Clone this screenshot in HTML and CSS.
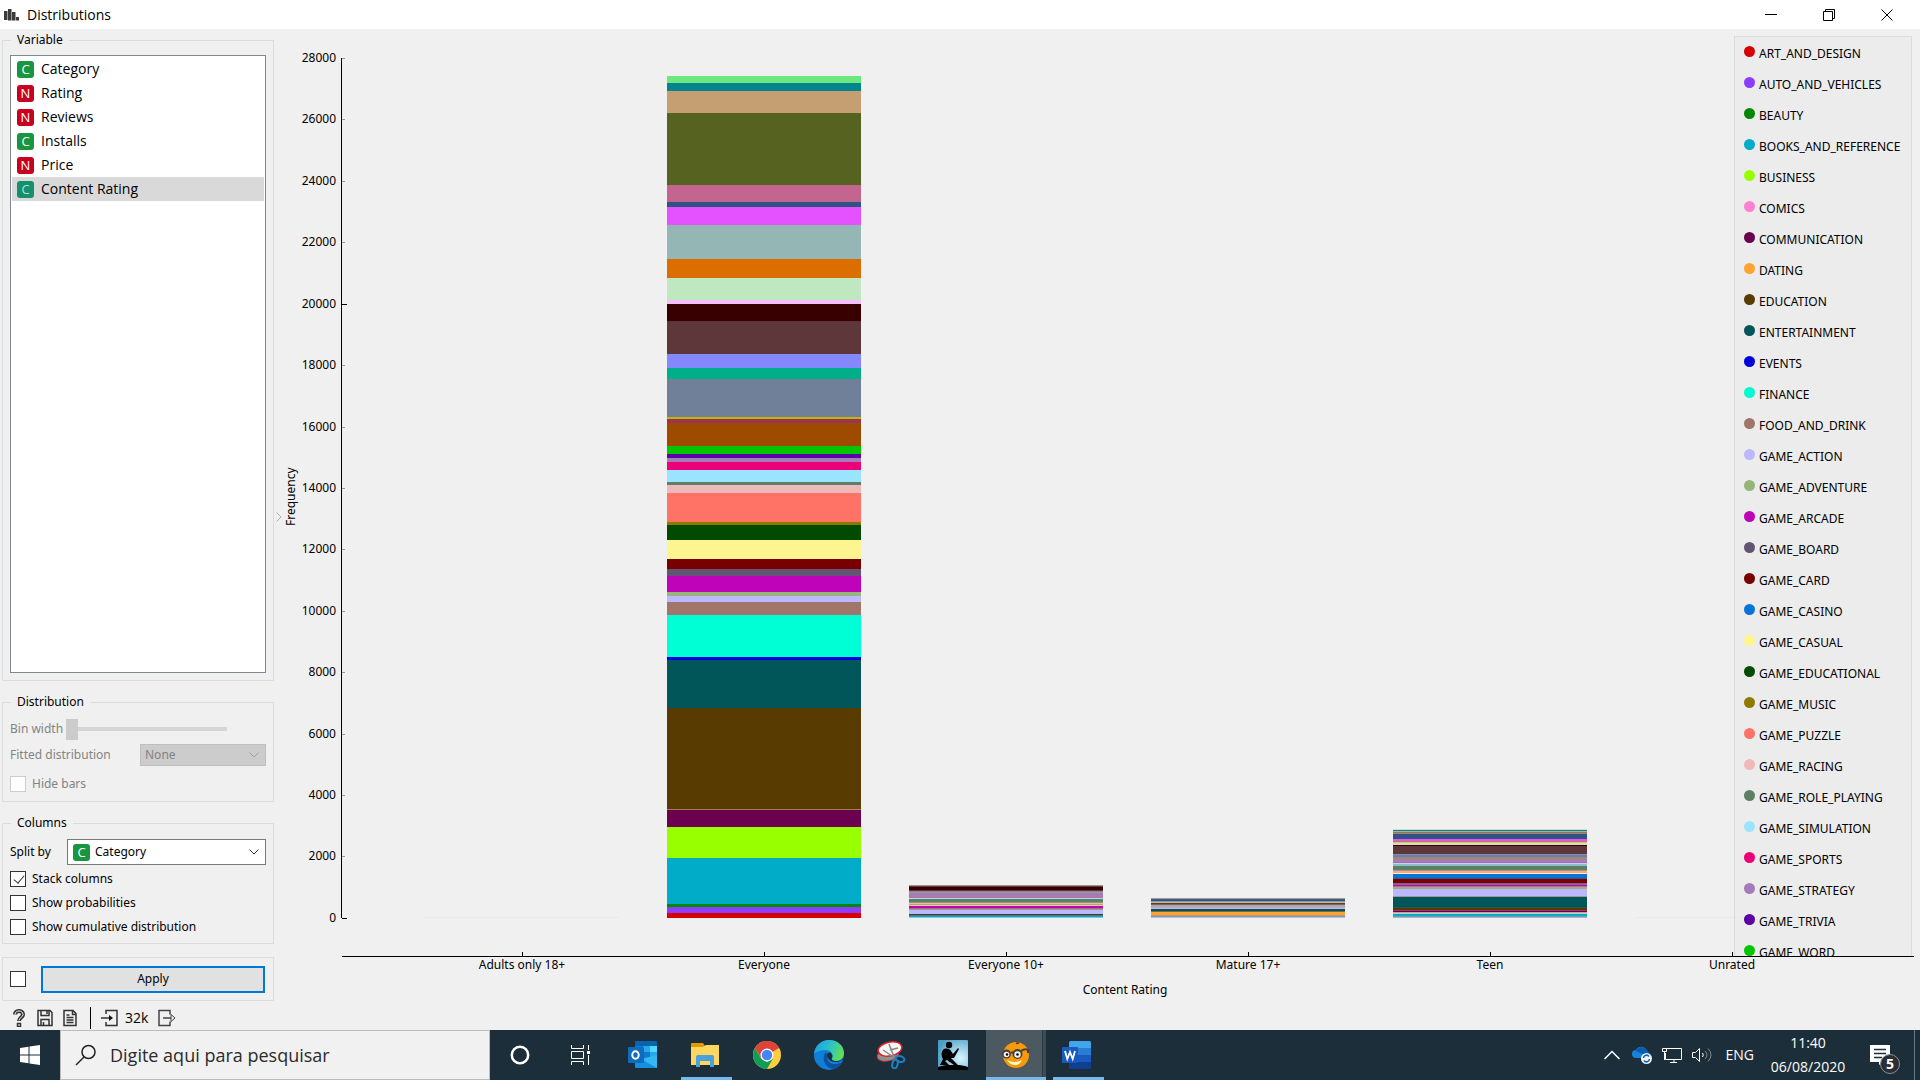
FILE: index.html
```html
<!DOCTYPE html>
<html lang="en">
<head>
<meta charset="utf-8">
<title>Distributions</title>
<link rel="stylesheet" href="styles.css">
</head>
<body>
<header class="titlebar">
  <svg class="app-icon" width="16" height="12" viewBox="0 0 16 12" fill="#3a3a3a"><path d="M0 2h3.500v9H0zM4 0h3.500v11.500H4zM8 3h3.500v8.500H8zM12 8h3v3.500h-3z"/></svg>
  <h1>Distributions</h1>
  <div class="win-controls">
    <button aria-label="Minimize"><svg width="12" height="12" viewBox="0 0 12 12" stroke="#000"><path d="M0 5.500h12"/></svg></button>
    <button aria-label="Restore"><svg width="12" height="12" viewBox="0 0 12 12" fill="none" stroke="#000"><path d="M.5 2.500h9v9h-9zM2.500 2.500v-2h9v9h-2"/></svg></button>
    <button aria-label="Close"><svg width="12" height="12" viewBox="0 0 12 12" stroke="#000"><path d="M.5.5l11 11M11.500.5l-11 11"/></svg></button>
  </div>
</header>

<main class="workspace">
  <aside class="controls">
    <fieldset class="group group-variable">
      <legend>Variable</legend>
      <ul class="var-list">
        <li><span class="badge cat">C</span>Category</li>
        <li><span class="badge num">N</span>Rating</li>
        <li><span class="badge num">N</span>Reviews</li>
        <li><span class="badge cat">C</span>Installs</li>
        <li><span class="badge num">N</span>Price</li>
        <li class="selected"><span class="badge cat">C</span>Content Rating</li>
      </ul>
    </fieldset>

    <fieldset class="group group-distribution" disabled>
      <legend>Distribution</legend>
      <div class="row">
        <label class="bin-label" for="bin">Bin width</label>
        <input id="bin" type="range" min="0" max="10" value="0">
      </div>
      <div class="row spread">
        <label for="fitted">Fitted distribution</label>
        <span class="combo combo-fitted"><select id="fitted"><option>None</option></select><svg class="chevron" width="10" height="6" viewBox="0 0 10 6" fill="none" stroke="currentColor"><path d="M.5.5L5 5 9.500.5"/></svg></span>
      </div>
      <label class="check"><input type="checkbox">Hide bars</label>
    </fieldset>

    <fieldset class="group group-columns">
      <legend>Columns</legend>
      <div class="row spread">
        <label for="split">Split by</label>
        <span class="combo combo-split"><span class="badge cat">C</span><select id="split"><option>Category</option></select><svg class="chevron" width="10" height="6" viewBox="0 0 10 6" fill="none" stroke="currentColor"><path d="M.5.5L5 5 9.500.5"/></svg></span>
      </div>
      <label class="check"><input type="checkbox" checked>Stack columns</label>
      <label class="check"><input type="checkbox">Show probabilities</label>
      <label class="check"><input type="checkbox">Show cumulative distribution</label>
    </fieldset>

    <div class="apply-box">
      <input type="checkbox" aria-label="Apply automatically">
      <button class="apply">Apply</button>
    </div>

    <div class="statusbar">
      <button aria-label="Help"><svg width="16" height="18" viewBox="0 0 16 18" fill="none"><path d="M4 5.500C4 .8 12 .8 12 5.500 12 8.500 8 8.500 8 12" stroke="#333" stroke-width="4"/><path d="M4 5.500C4 .8 12 .8 12 5.500 12 8.500 8 8.500 8 11.500" stroke="#f0f0f0" stroke-width="1"/><path d="M6.500 14.500h3v3h-3z" stroke="#333" stroke-width="1.500"/></svg></button>
      <button aria-label="Save"><svg width="16" height="18" viewBox="0 0 16 18" fill="none" stroke="#333" stroke-width="1.500"><path d="M1 1.500h12l2 2v13H1zM4 1.500v5h8v-5M4 16.500v-6h8v6M6.500 16v-3M10 2v3"/></svg></button>
      <button aria-label="Report"><svg width="14" height="18" viewBox="0 0 14 18" fill="none" stroke="#333" stroke-width="1.500"><path d="M1 1.500h9l3 3v12H1zM9.500 2v3.500H13M3.500 6h3M3.500 8.500h7M3.500 11h7M3.500 13.500h7"/></svg></button>
      <span class="separator"></span>
      <button aria-label="Input"><svg width="17" height="18" viewBox="0 0 17 18" fill="none" stroke="#333" stroke-width="1.500"><path d="M5 5V1.500h11v15H5V13"/><path d="M0 9h9" /><path d="M8 6l4 3-4 3z" fill="#111" stroke="none"/></svg></button>
      <span class="count">32k</span>
      <button aria-label="Output"><svg width="18" height="18" viewBox="0 0 18 18" fill="none" stroke="#444" stroke-width="1.500"><path d="M12 5.500v-4H1v15h11v-4"/><path d="M5 9h8"/><path d="M13 5.500L17 9l-4 3.500z" stroke-width="1"/></svg></button>
    </div>
  </aside>

  <button class="splitter" aria-label="Hide panel"><svg width="6" height="10" viewBox="0 0 6 10" fill="none" stroke="#b0b0b0"><path d="M.5.5L5 5 .5 9.500"/></svg></button>

  <section class="chart" aria-label="Distribution of Content Rating">
    <div class="y-title">Frequency</div>
    <ol class="y-axis">
      <li>28000</li><li>26000</li><li>24000</li><li>22000</li><li class="major">20000</li><li>18000</li><li>16000</li><li>14000</li><li>12000</li><li>10000</li><li>8000</li><li>6000</li><li>4000</li><li>2000</li><li class="major">0</li>
    </ol>
    <div class="plot">
      <div class="bars" id="bars"></div>
      <ul class="legend" id="legend"></ul>
    </div>
    <ol class="x-axis">
      <li>Adults only 18+</li><li>Everyone</li><li>Everyone 10+</li><li>Mature 17+</li><li>Teen</li><li>Unrated</li>
    </ol>
    <div class="x-title">Content Rating</div>
  </section>
</main>

<footer class="taskbar">
  <button class="start" aria-label="Start"><svg width="20" height="20" viewBox="0 0 20 20" fill="#fff"><path d="M0 3l8.500-1.200v7.700H0zM9.500 1.600L20 0v9.500H9.500zM0 10.500h8.500v7.700L0 17zM9.500 10.500H20V20L9.500 18.400z"/></svg></button>
  <label class="search">
    <svg width="22" height="22" viewBox="0 0 22 22" fill="none" stroke="#222" stroke-width="1.500"><circle cx="13.500" cy="8" r="6.500"/><path d="M9 13l-8 8"/></svg>
    <input type="text" placeholder="Digite aqui para pesquisar" aria-label="Search">
  </label>
  <nav class="apps">
    <button aria-label="Cortana"><svg width="20" height="20" viewBox="0 0 20 20" fill="none" stroke="#fff" stroke-width="2.500"><circle cx="10" cy="10" r="8.200"/></svg></button>
    <button aria-label="Task view"><svg width="22" height="20" viewBox="0 0 22 20" fill="none" stroke="#fff"><path d="M1.500 0v3.500h12V0M1.500 20v-3.500h12V20M1.500 6.500h12v7h-12zM18.500 0v5M18.500 10v10"/><path d="M17 6h3v3h-3z" fill="#fff" stroke="none"/></svg></button>
    <button aria-label="Outlook"><svg width="30" height="30" viewBox="0 0 30 30"><path d="M8 1h20a1 1 0 011 1v8H7V2z" fill="#0a64ad"/><path d="M7 6h8v12H7z" fill="#0f78d4"/><path d="M15 6h7v6h-7z" fill="#28a8ea"/><path d="M22 6h7v6h-7z" fill="#50d9ff"/><path d="M15 12h7v6h-7z" fill="#0f78d4"/><path d="M22 12h7v6h-7z" fill="#28a8ea"/><path d="M7 15l11 6 11-6v12a1 1 0 01-1 1H8a1 1 0 01-1-1z" fill="#1490df"/><path d="M29 15v13L13 19z" fill="#35b8f1"/><rect y="7" width="16" height="16" rx="1" fill="#0f6cbd"/><ellipse cx="7.500" cy="15" rx="3.200" ry="3.700" fill="none" stroke="#fff" stroke-width="2"/></svg></button>
    <button class="running" aria-label="File Explorer"><svg width="28" height="24" viewBox="0 0 28 24"><path d="M0 1q0-1 1-1h11l2 3v4H0z" fill="#e09b00"/><path d="M0 4h12l3-2h13v20H0z" fill="#ffd75e"/><path d="M5 24V14q0-2 2-2h14q2 0 2 2v10h-4v-6H9v6z" fill="#4ba0de"/></svg></button>
    <button aria-label="Chrome"><svg width="28" height="28" viewBox="0 0 28 28"><circle cx="14" cy="14" r="14" fill="#ffcd40"/><path d="M14 14L1.900 7A14 14 0 0126.100 7z" fill="#db4437"/><path d="M14 7h12.100A14 14 0 001.900 7L8 17z" fill="#db4437"/><path d="M1.900 7A14 14 0 0014 28l6-10.500L14 21l-6-3.500z" fill="#0f9d58"/><circle cx="14" cy="14" r="6.500" fill="#fff"/><circle cx="14" cy="14" r="5.200" fill="#4285f4"/></svg></button>
    <button aria-label="Edge"><svg width="30" height="30" viewBox="0 0 30 30"><defs><linearGradient id="edge-top" x1="0" x2="1" y1=".3" y2=".6"><stop stop-color="#1c9fe0"/><stop offset=".5" stop-color="#2cc3c8"/><stop offset="1" stop-color="#66e04a"/></linearGradient></defs><circle cx="15" cy="15" r="15" fill="#0f80d8"/><path d="M0 14C1 5 8 0 15 0c9 0 15 6 15 13 0 5-4 8-8 8-3 0-5-1-4-3 2-3-1-8-6-8C6 10 2 12 0 14z" fill="url(#edge-top)"/><path d="M12 12c-5 5-2 16 8 17 4-1 7-4 8-7-7 4-15 2-15-5 0-2 0-3-1-5z" fill="#0e4fa0"/><path d="M13 15c0 6 8 9 14.500 5.500l2.500-1v-2c-2 3-5 3.500-8 3.500-3 0-5-1-4-3 1-2 0-4-1-5-2-1-4 0-4 2z" fill="#1b303c"/></svg></button>
    <button aria-label="Snipping Tool"><svg width="30" height="28" viewBox="0 0 30 28"><ellipse cx="12" cy="14" rx="11" ry="6" transform="rotate(-12 12 14)" fill="#8f8f94" stroke="#b33"/><ellipse cx="14" cy="8" rx="12" ry="7" transform="rotate(-12 14 8)" fill="#f5f5f5" stroke="#d4232b" stroke-width="1.500"/><path d="M13 3l5 13M7 9l12 8M14 9l8-2" stroke="#888" stroke-width="1.500"/><g fill="none" stroke="#1c82c6" stroke-width="2"><ellipse cx="24" cy="18" rx="4.500" ry="2.800" transform="rotate(15 24 18)"/><ellipse cx="19" cy="23" rx="2.600" ry="4.500" transform="rotate(15 19 23)"/></g></svg></button>
    <button aria-label="Kindle"><svg width="30" height="30" viewBox="0 0 30 30"><defs><radialGradient id="kindle-sky" cx=".75" cy=".6" r=".8"><stop stop-color="#d8f6ff"/><stop offset="1" stop-color="#4a9dc4"/></radialGradient></defs><rect width="30" height="30" rx="1" fill="url(#kindle-sky)"/><path d="M0 27c4-1 6-2 9-2h11c4 0 7 1 10 2v3H0z"/><circle cx="11" cy="5" r="3.200"/><path d="M6 9c3-1 6 0 7 2l2 3 5-6 1 1-5 9h-3l7 7h-4l-7-5-2 1 4 4H2l3-6c-2-3-2-8 1-10z"/></svg></button>
    <button class="running active" aria-label="Orange"><svg width="28" height="28" viewBox="0 0 28 28"><circle cx="15" cy="14" r="13" fill="#f79a0c"/><circle cx="5.500" cy="13" r="4.500" fill="#4a4036"/><circle cx="16.500" cy="13" r="5" fill="#4a4036"/><circle cx="5.500" cy="13.500" r="2.800" fill="#f4f4f4"/><circle cx="16.500" cy="13.500" r="3.200" fill="#f4f4f4"/><circle cx="6" cy="13.500" r="1.200"/><circle cx="16.500" cy="13.500" r="1.300"/><path d="M10 11.500h2M20 10q4-3 7-1v3" fill="none" stroke="#4a4036" stroke-width="2"/><path d="M6 19q8 4 15 0-2 5-7 5-5 0-8-5z" fill="#fff7c8"/><path d="M15 2.500q2-1 3 0" fill="none" stroke="#5a3500" stroke-width="1.500"/></svg></button>
    <button class="running" aria-label="Word"><svg width="30" height="28" viewBox="0 0 30 28"><path d="M7 1.500A1.500 1.500 0 018.500 0h19A1.500 1.500 0 0129 1.500V7H7z" fill="#41a5ee"/><path d="M7 7h22v7H7z" fill="#2b7cd3"/><path d="M7 14h22v7H7z" fill="#185abd"/><path d="M7 21h22v5.500a1.500 1.500 0 01-1.500 1.500h-19A1.500 1.500 0 017 26.500z" fill="#103f91"/><rect y="6" width="16" height="16" rx="1" fill="#185abd"/><path d="M3 10l2.300 8L8 11l2.700 7L13 10" fill="none" stroke="#fff" stroke-width="1.800"/></svg></button>
  </nav>
  <div class="tray">
    <button aria-label="Show hidden icons"><svg width="16" height="10" viewBox="0 0 16 10" fill="none" stroke="#fff" stroke-width="1.500"><path d="M.5 9L8 1.500 15.500 9"/></svg></button>
    <button aria-label="OneDrive"><svg width="20" height="18" viewBox="0 0 20 18"><path d="M4 12a4 4 0 010-8 6 6 0 0111 1 4 4 0 011 7z" fill="#1683d8"/><path d="M5 3a6 6 0 0110 2 4 4 0 012 6L4 5z" fill="#0a5cb0"/><circle cx="14.500" cy="12.500" r="5.500" fill="#f2f2f2"/><path d="M11.500 12a3 3 0 015.500-1.500M17.500 13a3 3 0 01-5.500 1.500" fill="none" stroke="#0a6ac0" stroke-width="1.500"/></svg></button>
    <button aria-label="Network"><svg width="20" height="18" viewBox="0 0 20 18" fill="none" stroke="#fff"><path d="M4.500 2.500h15v11h-16V7M12 13.500v3M8 16.500h7M.5 2.500h4v3h-4zM2.500 5v9"/></svg></button>
    <button aria-label="Volume"><svg width="20" height="18" viewBox="0 0 20 18" fill="none" stroke="#fff"><path d="M.5 6.500h3l4-4v13l-4-4h-3zM10.500 7q1.500 2 0 4"/><path d="M13 5q4 4 0 8M16 2.500q6 6.500 0 13" stroke="#7f8a92"/></svg></button>
    <span class="lang">ENG</span>
    <div class="clock"><time>11:40</time><time>06/08/2020</time></div>
    <button class="notify" aria-label="Notifications"><svg width="20" height="20" viewBox="0 0 20 20"><path d="M0 0h20v17h-7l-4 3v-3H0z" fill="#fff"/><path d="M4 4.500h12M4 8.500h12M4 12.500h8" stroke="#1c2e3a" stroke-width="1.500"/></svg><span class="notify-count">5</span></button>
    <span class="peek"></span>
  </div>
</footer>
<script src="chart.js"></script>
</body>
</html>
```

FILE: styles.css
```css
* { box-sizing: border-box; }

:root {
  --ui: "Noto Sans", "DejaVu Sans Condensed", sans-serif;
  --segoe: "Open Sans", "Noto Sans", sans-serif;
  --line: #dcdcdc;
}

body {
  margin: 0;
  min-height: 100vh;
  display: flex;
  flex-direction: column;
  background: #f0f0f0;
  color: #000;
  font: 12px/16px var(--ui);
}

button {
  display: flex;
  align-items: center;
  justify-content: center;
  padding: 0;
  border: 0;
  background: none;
  font: inherit;
  color: inherit;
}

svg { display: block; flex: none; }

ul, ol { list-style: none; margin: 0; padding: 0; }

/* Title bar */
.titlebar {
  display: flex;
  align-items: center;
  height: 29px;
  padding: 0 4px;
  background: #fff;
}
.titlebar h1 {
  margin: 0 0 0 7px;
  font: 14px/20px var(--segoe);
}
.win-controls { display: flex; margin-left: auto; }
.win-controls button { width: 58px; height: 28px; }

/* Main area */
.workspace { flex: 1; display: flex; }

.controls {
  width: 274px;
  padding: 3px 0 0 2px;
  display: flex;
  flex-direction: column;
  gap: 13px;
}

.group {
  margin: 0;
  min-width: 0;
  padding: 8px 7px 7px;
  border: 1px solid var(--line);
}
.group legend { margin-left: 1px; padding: 0 6px; }
.group-variable { flex: 1; display: flex; flex-direction: column; padding-top: 7px; }

.var-list {
  flex: 1;
  padding: 1px;
  border: 1px solid #828790;
  background: #fff;
  font: 14px/24px var(--segoe);
}
.var-list li { display: flex; align-items: center; gap: 7px; padding-left: 5px; }
.var-list .selected { background: #d9d9d9; }
.var-list .selected .badge { background: #168f6c; color: #b5e0d4; }

.badge {
  width: 17px;
  height: 17px;
  border-radius: 3px;
  color: #fff;
  font: 13px/17px var(--segoe);
  text-align: center;
}
.badge.cat { background: #1a9641; }
.badge.num { background: #ca0020; }

.row { display: flex; align-items: center; height: 22px; gap: 4px; margin-bottom: 4px; }
.spread { justify-content: space-between; }
.bin-label { width: 52px; white-space: nowrap; }

.group-distribution { color: #838383; }
.group-distribution legend { color: #000; }
.group-distribution .check { height: 20px; margin-top: 8px; }

input[type="range"] {
  appearance: none;
  width: 161px;
  height: 22px;
  margin: 0;
  background: linear-gradient(#d6d6d6, #d6d6d6) center / 100% 4px no-repeat;
}
input[type="range"]::-webkit-slider-thumb {
  appearance: none;
  width: 12px;
  height: 21px;
  background: #ccc;
}

.combo {
  display: flex;
  align-items: center;
  padding: 0 6px 0 4px;
  border: 1px solid #7a7a7a;
  background: #fff;
  color: #333;
}
.combo select {
  flex: 1;
  appearance: none;
  min-width: 0;
  padding: 0;
  border: 0;
  background: none;
  font: inherit;
  color: #000;
  opacity: 1;
}
.combo-fitted { width: 126px; height: 22px; background: #ccc; border-color: #bfbfbf; color: #a0a0a0; }
.combo-fitted select { color: #838383; }
.combo-split { width: 199px; height: 26px; padding-left: 5px; gap: 5px; }

input[type="checkbox"] {
  appearance: none;
  width: 16px;
  height: 16px;
  margin: 0;
  border: 1px solid #333;
  background: #fff;
}
input[type="checkbox"]:disabled { border-color: #ccc; }
input[type="checkbox"]:checked::before {
  content: "";
  display: block;
  width: 5px;
  height: 9px;
  margin: 1px 0 0 5px;
  border: solid #333;
  border-width: 0 1px 1px 0;
  transform: rotate(40deg);
}
.check { display: flex; align-items: center; gap: 6px; height: 24px; }
.group-columns { padding-bottom: 4px; }
.group-columns .row { height: 26px; margin-bottom: 2px; }

.apply-box {
  display: flex;
  align-items: center;
  gap: 15px;
  height: 44px;
  padding: 0 8px 0 7px;
  border: 1px solid var(--line);
}
.apply { flex: 1; height: 27px; border: 2px solid #0078d7; background: #e1e1e1; }

.statusbar {
  display: flex;
  align-items: center;
  gap: 10px;
  height: 25px;
  margin-top: -9px;
  padding-left: 9px;
}
.separator { width: 1px; height: 22px; margin-left: 3px; background: #000; }
.count { font: 14px/20px var(--segoe); margin-left: -3px; }

.splitter { width: 9px; padding-bottom: 26px; }

/* Chart */
.chart {
  flex: 1;
  min-width: 0;
  display: grid;
  grid-template-columns: 14px 45px 1fr;
  grid-template-rows: 1fr 18px 32px;
  padding: 7px 6px 23px 0;
}
.y-title {
  writing-mode: vertical-rl;
  transform: rotate(180deg);
  text-align: center;
}
.y-axis {
  display: flex;
  flex-direction: column;
  justify-content: space-between;
  position: relative;
  padding: 14px 6px 31px 0;
  text-align: right;
}
.y-axis::after {
  content: "";
  position: absolute;
  inset: 22px 0 39px auto;
  width: 1px;
  background: #000;
}
.y-axis li { position: relative; }
.y-axis li::after {
  content: "";
  position: absolute;
  left: 100%;
  top: 8px;
  margin-left: 6px;
  width: 3px;
  height: 1px;
  background: #969696;
}
.y-axis .major::after { width: 5px; background: #000; }

.plot {
  position: relative;
  overflow: hidden;
  padding: 22px 0 38px;
  border-bottom: 1px solid #000;
}
.bars, .x-axis {
  display: grid;
  grid-template-columns: repeat(6, 1fr);
  padding: 0 61px 0 59px;
}
.bars { height: 100%; align-items: end; }
.bar {
  display: flex;
  flex-direction: column;
  justify-self: center;
  width: 80%;
  min-height: 1px;
  background: #e9e9e9;
}
.x-axis {
  grid-column: 3;
  text-align: center;
}
.x-axis li { position: relative; white-space: nowrap; }
.x-axis li::before {
  content: "";
  position: absolute;
  left: 50%;
  bottom: 100%;
  width: 1px;
  height: 5px;
  background: #000;
}
.x-title { grid-column: 3; text-align: center; padding: 7px 6px 0 0; }

.legend {
  position: absolute;
  inset: 0 2px 0 auto;
  width: 178px;
  padding-top: 1px;
  border: solid #dcdcdc;
  border-width: 1px 1px 0;
  background: rgba(233, 233, 233, 0.7);
}
.legend li { display: flex; align-items: center; gap: 4px; height: 31px; padding-left: 9px; }
.dot { width: 11px; height: 11px; margin-bottom: 4px; border-radius: 50%; }

/* Taskbar */
.taskbar {
  display: flex;
  height: 50px;
  background: #1c2e3a;
  color: #fff;
  font: 14px/24px var(--segoe);
}
.start { width: 60px; }
.search {
  display: flex;
  align-items: center;
  gap: 13px;
  width: 430px;
  padding-left: 14px;
  border: 1px solid #bcbcbc;
  background: #f1f1f1;
}
.search input {
  flex: 1;
  min-width: 0;
  padding: 0;
  border: 0;
  background: none;
  font: 18px/24px var(--segoe);
}
.search input::placeholder { color: #2b2b2b; opacity: 1; }

.apps { display: flex; }
.apps button { position: relative; width: 62px; }
.apps button:first-child { width: 60px; }
.apps .active { background: linear-gradient(90deg, #4c5961 56px, #2a3b46 56px, #2a3b46 57px, #3d4b55 57px) 2px 0 / 61px 100% no-repeat; }
.running::after {
  content: "";
  position: absolute;
  inset: auto 4px 0 7px;
  height: 3px;
  background: #76b9ed;
}
.active::after { inset: auto 0 0 2px; }

.tray { display: flex; align-items: center; margin-left: auto; gap: 10px; }
.tray button { height: 100%; }
.tray button:first-child { margin-right: 2px; }
.lang { margin-left: 4px; }
.clock { display: flex; flex-direction: column; width: 80px; margin-left: 4px; text-align: center; }
.notify { position: relative; width: 34px; margin-left: 12px; justify-content: flex-start; }
.notify-count {
  position: absolute;
  left: 10px;
  top: 24px;
  width: 20px;
  height: 20px;
  border: 1px solid #8c9196;
  border-radius: 50%;
  background: #2b2d35;
  font: 700 14px/18px var(--segoe);
  text-align: center;
}
.peek { width: 6px; height: 100%; border-left: 1px solid #6b7780; }
```

FILE: chart.js
```js
const categories = [
  ["ART_AND_DESIGN", "#d60000"], ["AUTO_AND_VEHICLES", "#8c3cff"], ["BEAUTY", "#008800"],
  ["BOOKS_AND_REFERENCE", "#00acc7"], ["BUSINESS", "#98ff00"], ["COMICS", "#ff7fd1"],
  ["COMMUNICATION", "#6b004f"], ["DATING", "#ffa52f"], ["EDUCATION", "#573b00"],
  ["ENTERTAINMENT", "#005659"], ["EVENTS", "#0000dd"], ["FINANCE", "#00fdcf"],
  ["FOOD_AND_DRINK", "#a17569"], ["GAME_ACTION", "#bcb7ff"], ["GAME_ADVENTURE", "#95b579"],
  ["GAME_ARCADE", "#bf03b8"], ["GAME_BOARD", "#645474"], ["GAME_CARD", "#790000"],
  ["GAME_CASINO", "#0774d8"], ["GAME_CASUAL", "#fef590"], ["GAME_EDUCATIONAL", "#004b00"],
  ["GAME_MUSIC", "#8f7a00"], ["GAME_PUZZLE", "#ff7266"], ["GAME_RACING", "#eeb9b9"],
  ["GAME_ROLE_PLAYING", "#5e7e66"], ["GAME_SIMULATION", "#9be4ff"], ["GAME_SPORTS", "#ec0077"],
  ["GAME_STRATEGY", "#a67bb9"], ["GAME_TRIVIA", "#5a00a4"], ["GAME_WORD", "#04c600"]
];

const scaleHeight = 860;

/* Each stack is listed from top to bottom as colour and thickness. */
const stacks = [
  "",
  "6ce87f 7,04848c 8,c59f72 22,566320 72,c4658f 17,2e5384 5,e451ff 18,94b6b5 34,dc6e00 19,bfe8c0 22,f7bff9 4,380000 17,5e373b 33,8488ff 14,00ae8a 11,708098 38,c4b500 2,9a3450 4,9e4b00 23,04c600 8,5a00a4 4,a67bb9 4,ec0077 8,9be4ff 12,5e7e66 3,eeb9b9 8,ff7266 29,8f7a00 3,004b00 15,fef590 19,790000 10,645474 7,bf03b8 16,95b579 4,bcb7ff 6,a17569 13,00ffd4 42,0000dd 3,005659 48,573b00 101,a08050 1,6b004f 17,98ff00 31,00acc7 46,008800 3,8c3cff 6,d60000 5",
  "a89090 1,5e373b 1,380000 3,5e373b 1,8f80a0 1,94a090 1,a67bb9 4,c07098 1,9be4ff 1,5e7e66 3,8a9a80 1,eeb9a0 1,b8a868 1,f0c0b0 1,bf03b8 2,a06a90 1,95a279 1,bcb7ff 4,005659 1,806850 1,00acc7 1,90c0e0 1",
  "9aa088 1,406088 1,2e5384 1,8098b0 1,c8c070 1,5e373b 1,806060 1,b0a8a8 1,a8b0b0 1,c0a8c8 1,bcb7ff 1,005659 2,80683a 1,ffa52f 3,c09080 1,8a9aa8 1,a0c4e8 1",
  "c8e0d0 1,04848c 1,b0b090 1,8a7a58 1,a08080 1,2e5384 5,e451ff 2,c8784a 1,d8c860 1,bfe8c0 1,e8d0c8 1,380000 1,5e373b 8,8488c8 1,708098 2,8a8a90 1,a09040 1,a67bb9 3,d85aa0 1,9be4ff 1,88c0c8 2,5e7e66 4,a89880 1,f8a890 2,fff0b8 1,0774d8 4,405080 1,790000 4,806080 1,8a6a90 1,bf03b8 1,c060b8 1,95b579 2,bcb7ff 7,a09898 1,005659 10,2a5840 1,573b00 2,a03070 1,6b004f 1,e888c8 1,98e8a0 1,00acc7 2,50b0b0 1,c8a0c8 1",
  ""
];

const bars = document.getElementById("bars");
for (const stack of stacks) {
  const bar = document.createElement("div");
  bar.className = "bar";
  let total = 0;
  for (const part of stack ? stack.split(",") : []) {
    const [colour, size] = part.split(" ");
    const segment = document.createElement("div");
    segment.style.background = "#" + colour;
    segment.style.flex = size + " 0 0";
    bar.append(segment);
    total += Number(size);
  }
  bar.style.height = (100 * total / scaleHeight) + "%";
  bars.append(bar);
}

const legend = document.getElementById("legend");
for (const [name, colour] of categories) {
  const item = document.createElement("li");
  const dot = document.createElement("span");
  dot.className = "dot";
  dot.style.background = colour;
  item.append(dot, name);
  legend.append(item);
}
```
